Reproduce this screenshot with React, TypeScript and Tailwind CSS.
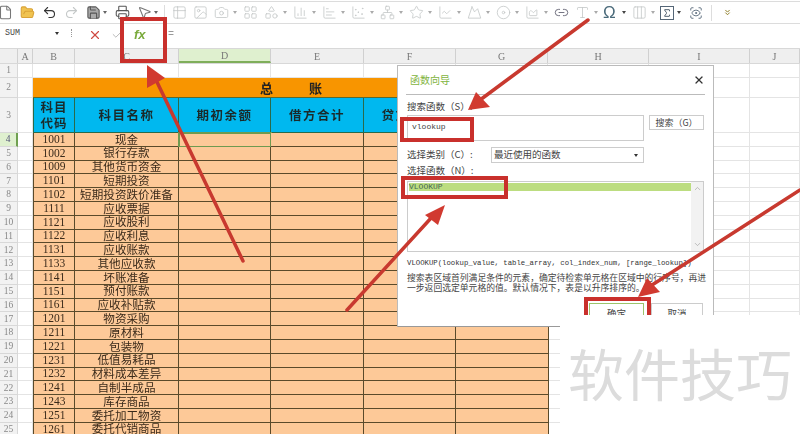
import React from "react";
import { File, FolderOpen, Undo2, Redo2, Save, Printer, MousePointer2, Table2, Image, Camera, LayoutGrid, Shapes, ChartColumn, ChartBar, ChartScatter, ChartArea, Network, Star, ChartLine, Mountain, Disc, Link2, Type, Columns3, Sigma, ScanEye, X, Check, ChevronUp, ChevronDown, ChevronsDown } from "lucide-react";

const cjk = "font-['Noto_Sans_CJK_SC',sans-serif]";
const Tri = ({ c = "border-t-[#666]" }: { c?: string }) => (
  <span className={`w-0 h-0 border-x-[2.5px] border-x-transparent border-t-[3px] ${c}`} />
);

const dim = "text-[#c4c8c8]";
const tools: { I: any; d?: boolean; cls: string; fill?: string }[] = [
  { I: File, cls: "text-[#777]" },
  { I: FolderOpen, cls: "text-[#d9a236]", fill: "#f0c350" },
  { I: Undo2, cls: "text-[#333]" },
  { I: Redo2, cls: dim },
  { I: Save, d: true, cls: "text-[#555]", fill: "#aaa" },
  { I: Printer, cls: "text-[#555]" },
  { I: MousePointer2, d: true, cls: "text-[#777]" },
];
const tools2: { I: any; d?: boolean; cls: string }[] = [
  { I: Table2, cls: dim },
  { I: Image, cls: dim },
  { I: Camera, d: true, cls: dim },
  { I: LayoutGrid, cls: dim },
  { I: Shapes, d: true, cls: dim },
  { I: ChartColumn, d: true, cls: dim },
  { I: ChartBar, d: true, cls: dim },
  { I: ChartScatter, d: true, cls: dim },
  { I: Network, d: true, cls: dim },
  { I: Star, d: true, cls: dim },
  { I: ChartLine, d: true, cls: dim },
  { I: Mountain, d: true, cls: dim },
  { I: Disc, d: true, cls: dim },
  { I: ChartArea, d: true, cls: dim },
  { I: Link2, cls: "text-[#556]" },
  { I: Type, d: true, cls: dim },
];

const Toolbar = () => (
  <div className="h-[23px] flex items-center border-y border-[#dcdcdc] mt-[2px] -mb-[2px] -translate-y-[1px] bg-white">
    <div className="flex items-center -ml-[2px]">
      {tools.map((t, i) => (
        <div key={i} className={`h-4 flex items-center gap-[2px] ${t.d ? "w-[29px]" : "w-[22px]"}`}>
          <t.I size={15} className={t.cls} fill={t.fill ?? "none"} strokeWidth={1.7} />
          {t.d && <Tri />}
        </div>
      ))}
      <div className="w-px h-4 bg-[#ddd] mr-[7px] -ml-[2px]" />
      {tools2.map((t, i) => (
        <div key={i} className={`h-4 flex items-center gap-[4px] ${t.d ? "w-[29px]" : "w-[21px]"}`}>
          <t.I size={15} className={t.cls} strokeWidth={1.3} />
          {t.d && <Tri c="border-t-[#aaa]" />}
        </div>
      ))}
      <div className="w-[29px] h-4 flex items-center gap-[3px] -ml-[1px]">
        <span className="text-[17px] leading-none w-4 text-[#4a6a7a] font-['Liberation_Sans',sans-serif]">Ω</span>
        <Tri c="border-t-[#444]" />
      </div>
      <div className="w-[28px] h-4 flex items-center gap-[4px]">
        <Columns3 size={15} className={dim} strokeWidth={1.3} />
        <Tri c="border-t-[#aaa]" />
      </div>
      <div className="w-[29px] h-4 flex items-center gap-[3px]">
        <span className="w-[14px] h-[14px] border border-[#567] flex items-center justify-center">
          <Sigma size={10} className="text-[#345]" strokeWidth={2} />
        </span>
        <Tri c="border-t-[#444]" />
      </div>
      <div className="w-[22px] h-4 flex items-center">
        <ScanEye size={14} className="text-[#567]" strokeWidth={1.5} />
      </div>
      <div className="w-px h-4 bg-[#ddd] mr-[11px]" />
      <ChevronsDown size={9} className="text-[#8a7a20]" strokeWidth={2.5} />
    </div>
  </div>
);

const FormulaBar = () => (
  <div className="h-[25px] flex items-center bg-white font-['Liberation_Mono',monospace] pb-[2px]">
    <span className="w-[55px] pl-[5px] text-[8.3px] text-[#444] -mt-[3px]">SUM</span>
    <span className="-mt-[3px] flex"><Tri c="border-t-[#333]" /></span>
    <span className="ml-[12px] w-[2px] h-[8px] border-l border-dotted border-[#999] -mt-[3px]" />
    <X size={14} className="ml-[15px] text-[#cf4a42]" strokeWidth={2} />
    <Check size={13} className="ml-[9px] text-[#aaa]" strokeWidth={1.5} />
    <span className="ml-[10px] w-[24px] text-[13px] font-semibold italic text-[#7aaa3c] font-['Liberation_Sans',sans-serif]">fx</span>
    <span className="ml-[10px] text-[10px] text-[#999]">=</span>
  </div>
);

const cols = [
  { l: "A", w: "w-[15px]" },
  { l: "B", w: "w-[42px]" },
  { l: "C", w: "w-[104px]" },
  { l: "D", w: "w-[92px]" },
  { l: "E", w: "w-[93px]" },
  { l: "F", w: "w-[92px]" },
  { l: "G", w: "w-[92px]" },
  { l: "H", w: "w-[101px]" },
  { l: "I", w: "w-[101px]" },
  { l: "J", w: "w-[50px]" },
];

const ColHeader = () => (
  <div className="h-[16px] flex bg-[#efefef] border-y border-[#d8d8d8] font-['Liberation_Serif',serif] text-[10px] text-[#777]">
    <div className="w-[18px] shrink-0 border-r border-[#d0d0d0]" />
    {cols.map((c) => (
      <div key={c.l} className={`${c.w} shrink-0 flex items-center justify-center border-r border-[#d0d0d0] ${c.l === "D" ? "bg-[#dff0cf] border-b-2 border-b-[#7fae5a]" : ""}`}>{c.l}</div>
    ))}
  </div>
);

const RowNum = ({ n, sel }: { n: number; sel?: boolean }) => (
  <div className={`w-[18px] shrink-0 flex items-center justify-center border-b border-[#d8d8d8] font-['Liberation_Serif',serif] text-[9.5px] ${sel ? "bg-[#dff0cf] border-r-2 border-r-[#6fa050] text-[#557]" : "bg-[#f2f2f2] border-r text-[#888]"}`}>{n}</div>
);

const Blank = ({ w }: { w: string }) => <div className={`${w} shrink-0 border-r border-b border-[#e4e4e4]`} />;

const data: [string, string][] = [
  ["1001", "现金"], ["1002", "银行存款"], ["1009", "其他货币资金"], ["1101", "短期投资"], ["1102", "短期投资跌价准备"],
  ["1111", "应收票据"], ["1121", "应收股利"], ["1122", "应收利息"], ["1131", "应收账款"], ["1133", "其他应收款"],
  ["1141", "坏账准备"], ["1151", "预付账款"], ["1161", "应收补贴款"], ["1201", "物资采购"], ["1211", "原材料"],
  ["1221", "包装物"], ["1231", "低值易耗品"], ["1232", "材料成本差异"], ["1241", "自制半成品"], ["1243", "库存商品"],
  ["1251", "委托加工物资"], ["1261", "委托代销商品"],
];

const bd = "border-r border-b border-[#5a4a2a]";

const Sheet = () => (
  <div className="flex flex-col">
    <div className="h-[14px] flex">
      <RowNum n={1} />
      {cols.map((c) => <Blank key={c.l} w={c.w} />)}
    </div>
    <div className="h-[20px] flex">
      <RowNum n={2} />
      <Blank w="w-[15px]" />
      <div className={`w-[516px] shrink-0 bg-[#f89500] flex items-center justify-center gap-[36px] text-[13px] font-bold text-[#222] border-b border-[#5a6a30] ${cjk}`}>
        <span>总</span><span>账</span>
      </div>
      <Blank w="w-[100px]" /><Blank w="w-[101px]" /><Blank w="w-[50px]" />
    </div>
    <div className="h-[35px] flex">
      <RowNum n={3} />
      <Blank w="w-[15px]" />
      <div className={`w-[42px] shrink-0 bg-[#00b8ef] border-l border-r border-b border-[#2a6a4a] flex items-center justify-center text-center text-[12.5px] leading-[16px] tracking-[1px] font-semibold text-[#1a2a2a] ${cjk}`}>科目<br />代码</div>
      {["科目名称", "期初余额", "借方合计", "贷方合计", ""].map((t, i) => (
        <div key={i} className={`${["w-[104px]", "w-[92px]", "w-[93px]", "w-[92px]", "w-[93px]"][i]} shrink-0 bg-[#00b8ef] border-r border-b border-[#2a6a4a] flex items-center justify-center text-[12.5px] tracking-[1.5px] font-semibold text-[#1a2a2a] ${cjk}`}>{t}</div>
      ))}
      <Blank w="w-[100px]" /><Blank w="w-[101px]" /><Blank w="w-[50px]" />
    </div>
    {data.map(([code, name], i) => (
      <div key={code} className="h-[13.8px] flex shrink-0">
        <RowNum n={i + 4} sel={i === 0} />
        <Blank w="w-[15px]" />
        <div className={`w-[42px] shrink-0 bg-[#fdc998] ${bd} border-l flex items-center justify-center text-[11.5px] text-[#3a2a1a] font-['Liberation_Serif',serif]`}>{code}</div>
        <div className={`w-[104px] shrink-0 bg-[#fdc998] ${bd} flex items-center justify-center text-[11.6px] leading-none text-[#3a2a1a] whitespace-nowrap ${cjk}`}>{name}</div>
        <div className={`w-[92px] shrink-0 bg-[#fdc998] ${bd} ${i === 0 ? "outline-2 -outline-offset-1 outline-[#6f9a50]" : ""}`} />
        <div className={`w-[93px] shrink-0 bg-[#fdc998] ${bd}`} />
        <div className={`w-[92px] shrink-0 bg-[#fdc998] ${bd}`} />
        <div className={`w-[93px] shrink-0 bg-[#fdc998] ${bd}`} />
        <Blank w="w-[100px]" /><Blank w="w-[101px]" /><Blank w="w-[50px]" />
      </div>
    ))}
  </div>
);

const Dialog = () => (
  <div className={`absolute left-[397px] top-[65px] w-[317px] h-[262px] bg-white border border-[#bbb] border-b-[#999] pl-[9px] pr-[9px] text-[#444] text-[9.5px] leading-none ${cjk}`}>
    <div className="h-[29px] flex items-center justify-between border-b border-[#bbb] -mx-[1px] pl-[4px]">
      <span className="text-[#7fb440] text-[10px]">函数向导</span>
      <X size={12} className="text-[#333]" strokeWidth={2.5} />
    </div>
    <div className="mt-[7px] h-[10px]">搜索函数（S）:</div>
    <div className="mt-[3px] flex gap-[5px]">
      <div className="w-[237px] h-[26px] border border-[#ccc] pl-[4px] pt-[7px] text-[8px] font-['Liberation_Mono',monospace]">vlookup</div>
      <div className="w-[55px] h-[15px] border border-[#ccc] flex items-center justify-center text-[9px]">搜索（G）</div>
    </div>
    <div className="mt-[6px] flex items-center h-[16px]">
      <span className="w-[84px]">选择类别（C）:</span>
      <div className="w-[153px] h-[16px] border border-[#ccc] pl-[2px] pr-[5px] flex items-center justify-between text-[9.5px]">
        最近使用的函数<Tri c="border-t-[#333]" />
      </div>
    </div>
    <div className="mt-[3px] h-[10px]">选择函数（N）:</div>
    <div className="mt-[5px] w-[297px] h-[71px] border border-[#ccc] flex pt-[1px]">
      <div className="flex-1 pl-[1px]">
        <div className="h-[8px] bg-[#bcdd80] text-[8px] leading-[8px] font-['Liberation_Mono',monospace] text-[#465]">VLOOKUP</div>
      </div>
      <div className="w-[12px] -mt-[1px] bg-[#f2f2f2] flex flex-col items-center justify-between py-[2px]">
        <ChevronUp size={9} className="text-[#aaa]" /><ChevronDown size={9} className="text-[#aaa]" />
      </div>
    </div>
    <div className="mt-[8px] text-[7.3px] whitespace-nowrap font-['Liberation_Mono',monospace] text-[#333]">VLOOKUP(lookup_value, table_array, col_index_num, [range_lookup])</div>
    <div className="mt-[6px] text-[8.8px] leading-[9.5px] w-[300px] text-[#444]">搜索表区域首列满足条件的元素，确定待检索单元格在区域中的行序号，再进一步返回选定单元格的值。默认情况下，表是以升序排序的。</div>
    <div className="mt-[11px] flex justify-end gap-[7px] pr-[1px]">
      <div className="w-[55px] h-[20px] border border-[#9cc46c] flex items-center justify-center">确定</div>
      <div className="w-[52px] h-[20px] border border-[#ccc] flex items-center justify-center">取消</div>
    </div>
  </div>
);

const Box = ({ cls }: { cls: string }) => <div className={`absolute border-[4px] border-[#c9302c] ${cls}`} />;

const Arrows = () => (
  <svg className="absolute inset-0" width="800" height="434" viewBox="0 0 800 434">
    <g fill="none" stroke="#c8392f" strokeWidth="3.5" strokeLinecap="round">
      <line x1="243" y1="261" x2="157" y2="82" />
      <line x1="588" y1="20" x2="480" y2="100" />
      <line x1="347" y1="310" x2="432" y2="217" />
      <line x1="800" y1="190" x2="652" y2="285" />
    </g>
    <g fill="#d13a30">
      <polygon points="147,65 165,78 147,88" />
      <polygon points="468,110 476,92 490,107" />
      <polygon points="445,205 425,215 438,225" />
      <polygon points="638,297 647,278 660,292" />
    </g>
  </svg>
);

export default function App() {
  return (
    <div className="relative w-[800px] h-[434px] overflow-hidden bg-white">
      <div className="blur-[0.35px] h-full overflow-hidden">
        <Toolbar />
        <FormulaBar />
        <ColHeader />
        <Sheet />
        <Dialog />
      </div>
      <Arrows />
      <Box cls="left-[120px] top-[17px] w-[47px] h-[46px]" />
      <Box cls="left-[400px] top-[117px] w-[74px] h-[25px]" />
      <Box cls="left-[401px] top-[176px] w-[107px] h-[23px]" />
      <Box cls="left-[584px] top-[297px] w-[67px] h-[30px]" />
      <div className={`absolute left-[560px] top-[315px] right-0 bottom-0 bg-white flex justify-center pt-[22px] text-[56px] leading-[70px] text-[#dcdcdc] whitespace-nowrap ${cjk}`}>软件技巧</div>
    </div>
  );
}
